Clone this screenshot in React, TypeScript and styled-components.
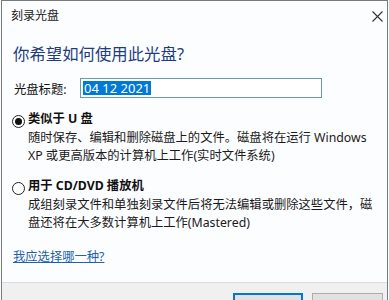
import React from "react";
import styled, { createGlobalStyle } from "styled-components";

const GlobalStyle = createGlobalStyle`
  html, body {
    margin: 0;
    padding: 0;
    background: #fcfdff;
    overflow: hidden;
  }
  body {
    font-family: "Noto Sans", "Noto Sans CJK SC", sans-serif;
    color: #111;
  }
`;

const Window = styled.div`
  box-sizing: border-box;
  margin-left: 1px;
  width: 387px;
  height: 300px;
  overflow: hidden;
  border: 1px solid #7a7a7a;
  border-bottom: none;
  background: #fcfdff;
  display: flex;
  flex-direction: column;
`;

const Main = styled.div`
  height: 281px;
  flex-shrink: 0;
  display: flex;
  flex-direction: column;
`;

const TitleBar = styled.div`
  height: 30px;
  display: flex;
  align-items: center;
  justify-content: space-between;
  padding-left: 9px;
`;

const TitleText = styled.span`
  font-size: 12px;
  line-height: 16px;
  color: #1a1a1a;
`;

const CloseBox = styled.div`
  width: 20px;
  height: 30px;
  display: flex;
  align-items: center;
  justify-content: center;
`;

const Content = styled.div`
  padding: 0 12px 0 12px;
  display: flex;
  flex-direction: column;
`;

const Heading = styled.div`
  margin-top: 12px;
  margin-left: -1px;
  font-size: 16.4px;
  line-height: 22px;
  color: #1f3d7c;
`;

const FieldRow = styled.div`
  margin-top: 13px;
  display: flex;
  align-items: center;
  height: 20px;
`;

const FieldLabel = styled.span`
  width: 66px;
  font-size: 12.3px;
  line-height: 17px;
  padding-top: 3px;
`;

const TextBox = styled.div`
  box-sizing: border-box;
  width: 242px;
  height: 20px;
  border: 1px solid #6a9ea7;
  background: #fff;
  display: flex;
  align-items: center;
  padding-left: 2px;
`;

const Selected = styled.span`
  background: #0078d7;
  color: #fff;
  font-size: 13px;
  line-height: 14px;
  padding: 0 1px;
`;

const Option = styled.div<{ $top: number }>`
  margin-top: ${(p) => p.$top}px;
  display: flex;
  flex-direction: column;
`;

const OptionHead = styled.div`
  display: flex;
  align-items: center;
  height: 18px;
`;

const Radio = styled.span<{ $checked?: boolean }>`
  box-sizing: border-box;
  margin-left: -2px;
  margin-right: 3px;
  margin-top: 4px;
  width: 13px;
  height: 13px;
  border-radius: 50%;
  border: 1px solid #222;
  background: #fff;
  display: flex;
  align-items: center;
  justify-content: center;
  &::after {
    content: "";
    display: ${(p) => (p.$checked ? "block" : "none")};
    width: 7px;
    height: 7px;
    border-radius: 50%;
    background: #111;
  }
`;

const OptionLabel = styled.span`
  font-size: 12.3px;
  font-weight: 700;
  line-height: 18px;
`;

const Description = styled.div`
  margin-top: 1px;
  padding-left: 14px;
  font-size: 12.3px;
  line-height: 17.5px;
  white-space: nowrap;
  color: #1a1a1a;
`;

const HelpLink = styled.a`
  margin-top: 17px;
  margin-left: -1px;
  font-size: 12.3px;
  line-height: 18px;
  color: #1f62a8;
  text-decoration: underline;
  align-self: flex-start;
`;

const Footer = styled.div`
  flex: 1;
  border-top: 1px solid #dcdcdc;
  background: #f0f0f0;
  display: flex;
  justify-content: flex-end;
  align-items: flex-start;
  gap: 9px;
  padding: 10px 4px 0 0;
`;

const Button = styled.button<{ $primary?: boolean; $w: number }>`
  box-sizing: border-box;
  flex-shrink: 0;
  width: ${(p) => p.$w}px;
  height: 23px;
  border: 1px solid ${(p) => (p.$primary ? "#0078d7" : "#adadad")};
  box-shadow: ${(p) => (p.$primary ? "inset 0 0 0 1px #0078d7" : "none")};
  background: #e1e1e1;
  font-family: "Noto Sans", "Noto Sans CJK SC", sans-serif;
  font-size: 12.3px;
  line-height: 16px;
  color: #111;
  padding: 0;
  padding-top: 6px;
  display: flex;
  justify-content: center;
  align-items: flex-start;
`;

const CloseIcon = () => (
  <svg width="11" height="11" viewBox="0 0 11 11">
    <path d="M0.5 0.5 L10.5 10.5 M10.5 0.5 L0.5 10.5" stroke="#333" strokeWidth="1.1" fill="none" />
  </svg>
);

export default function App() {
  return (
    <>
      <GlobalStyle />
      <Window>
        <Main>
          <TitleBar>
            <TitleText>刻录光盘</TitleText>
            <CloseBox>
              <CloseIcon />
            </CloseBox>
          </TitleBar>
          <Content>
            <Heading>你希望如何使用此光盘?</Heading>
            <FieldRow>
              <FieldLabel>光盘标题:</FieldLabel>
              <TextBox>
                <Selected>04 12 2021</Selected>
              </TextBox>
            </FieldRow>
            <Option $top={12}>
              <OptionHead>
                <Radio $checked />
                <OptionLabel>类似于 U 盘</OptionLabel>
              </OptionHead>
              <Description>
                随时保存、编辑和删除磁盘上的文件。磁盘将在运行 Windows
                <br />
                XP 或更高版本的计算机上工作(实时文件系统)
              </Description>
            </Option>
            <Option $top={13}>
              <OptionHead>
                <Radio />
                <OptionLabel>用于 CD/DVD 播放机</OptionLabel>
              </OptionHead>
              <Description>
                成组刻录文件和单独刻录文件后将无法编辑或删除这些文件，磁
                <br />
                盘还将在大多数计算机上工作(Mastered)
              </Description>
            </Option>
            <HelpLink href="#">我应选择哪一种?</HelpLink>
          </Content>
        </Main>
        <Footer>
          <Button $primary $w={70}>下一步</Button>
          <Button $w={71}>取消</Button>
        </Footer>
      </Window>
    </>
  );
}
